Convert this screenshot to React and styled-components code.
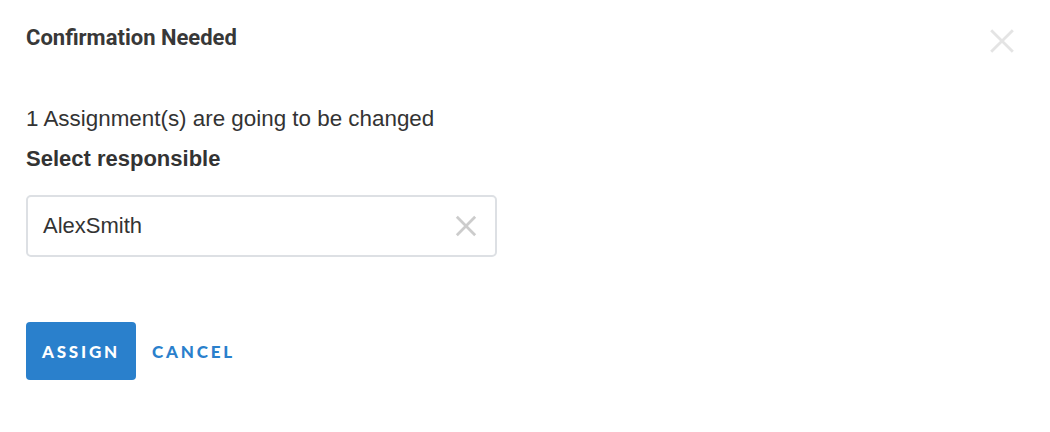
import React, { useState } from "react";
import styled, { createGlobalStyle } from "styled-components";

const Global = createGlobalStyle`
    body {
        margin: 0;
        background: #ffffff;
    }
`

const Dialog = styled.div`
    width: 1050px;
    height: 432px;
    box-sizing: border-box;
    padding: 26px 26px 0 26px;
    display: flex;
    flex-direction: column;
    background: #fff;
`

const Header = styled.div`
    display: flex;
    justify-content: space-between;
    align-items: flex-start;
`

const Title = styled.h2`
    margin: 0;
    font-family: Roboto, sans-serif;
    font-weight: 700;
    font-size: 22px;
    line-height: 24px;
    color: #383838;
`

const CloseButton = styled.button`
    background: none;
    border: none;
    padding: 0;
    margin: 2px 9px 0 0;
    cursor: pointer;
    display: flex;
`

const Message = styled.p`
    margin: 53px 0 0 0;
    font-family: "Liberation Sans", Arial, sans-serif;
    font-size: 22.4px;
    line-height: 24px;
    color: #333;
`

const Label = styled.div`
    margin-top: 16px;
    font-family: "Liberation Sans", Arial, sans-serif;
    font-weight: 700;
    font-size: 22px;
    line-height: 24px;
    color: #333;
`

const SelectBox = styled.div`
    margin-top: 24px;
    width: 471px;
    height: 62px;
    box-sizing: border-box;
    border: 2px solid #dde0e4;
    border-radius: 5px;
    display: flex;
    align-items: center;
    justify-content: space-between;
    padding: 0 18px 0 15px;
`

const Value = styled.span`
    font-family: "Liberation Sans", Arial, sans-serif;
    font-size: 22px;
    color: #333;
`

const Actions = styled.div`
    margin-top: 65px;
    display: flex;
    align-items: center;
    gap: 16px;
`

const ActionButton = styled.button`
    height: 58px;
    padding: 0 ${(p) => (p.primary ? "15px" : "0")};
    min-width: ${(p) => (p.primary ? "110px" : "0")};
    border: none;
    border-radius: 4px;
    background: ${(p) => (p.primary ? "#2a80cc" : "transparent")};
    color: ${(p) => (p.primary ? "#fff" : "#2a80cc")};
    font-family: Lato, sans-serif;
    font-weight: 900;
    font-size: 17px;
    letter-spacing: 2.8px;
    text-transform: uppercase;
    cursor: pointer;
`

const Cross = ({ size, color, width }) => (
    <svg width={size} height={size} viewBox="0 0 24 24">
        <path d="M2 2 L22 22 M22 2 L2 22" stroke={color} strokeWidth={width} />
    </svg>
)

const App = () => {
    const [user] = useState("AlexSmith");

    return (
        <>
            <Global />
            <Dialog>
                <Header>
                    <Title>Confirmation Needed</Title>
                    <CloseButton>
                        <Cross size={26} color="#e4e4e4" width={2.6} />
                    </CloseButton>
                </Header>
                <Message>1 Assignment(s) are going to be changed</Message>
                <Label>Select responsible</Label>
                <SelectBox>
                    <Value>{user}</Value>
                    <Cross size={22} color="#cccccc" width={3} />
                </SelectBox>
                <Actions>
                    <ActionButton primary>Assign</ActionButton>
                    <ActionButton>Cancel</ActionButton>
                </Actions>
            </Dialog>
        </>
    );
};

export default App;
